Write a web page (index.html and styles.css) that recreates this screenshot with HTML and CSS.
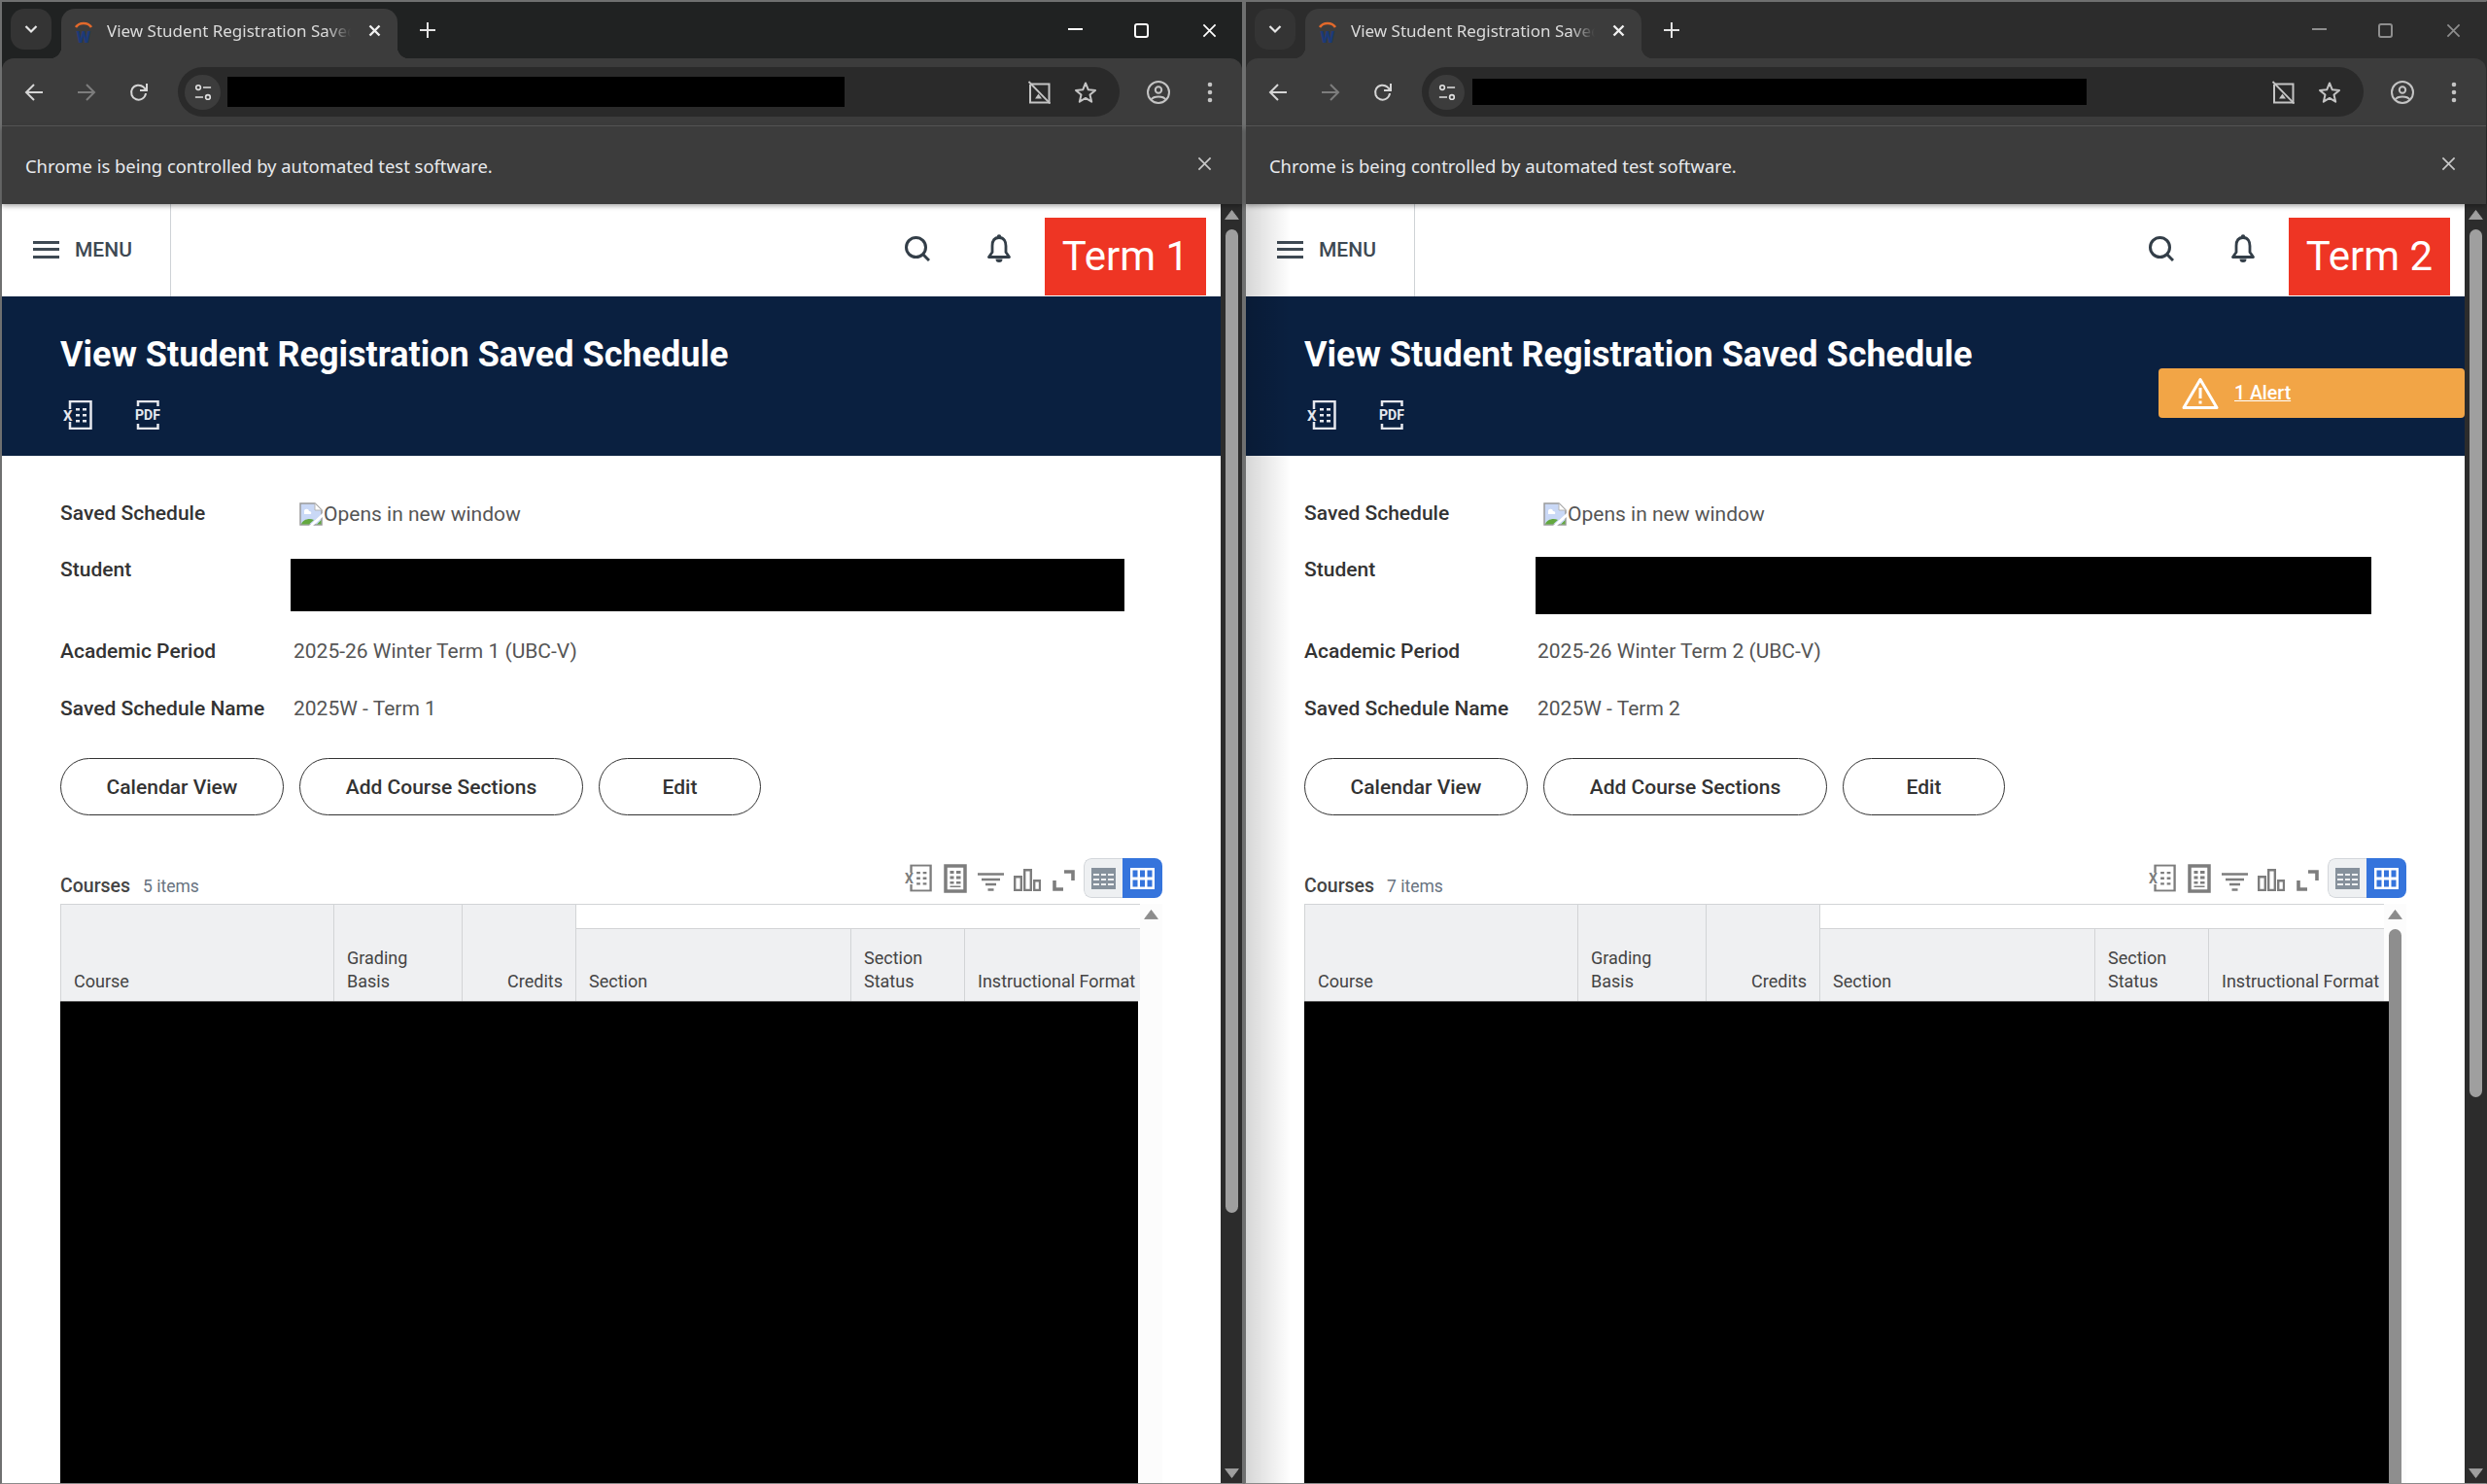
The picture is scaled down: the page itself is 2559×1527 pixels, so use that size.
FILE: index.html
```html
<!DOCTYPE html>
<html lang="en">
<head>
  <meta charset="UTF-8" />
  <title>View Student Registration Saved Schedule</title>
  <link rel="stylesheet" href="styles.css">
</head>
<body>
  <!-- shared icons -->
  <svg class="sprite" aria-hidden="true">
    <symbol id="i-close" viewBox="0 0 16 16">
      <path d="M1.5 1.5 14.5 14.5M14.5 1.5 1.5 14.5" fill="none" stroke="currentColor" stroke-width="1.8"/>
    </symbol>
    <symbol id="i-tabclose" viewBox="0 0 13 13">
      <path d="M1.5 1.5 11.500 11.500M11.500 1.5 1.5 11.500" fill="none" stroke="currentColor" stroke-width="2.400"/>
    </symbol>
    <symbol id="i-chevron" viewBox="0 0 14 10">
      <path d="M1.5 2 7 7.5 12.5 2" fill="none" stroke="currentColor" stroke-width="2.2"/>
    </symbol>
    <symbol id="i-plus" viewBox="0 0 16 16">
      <path d="M8 0V16M0 8H16" fill="none" stroke="currentColor" stroke-width="2"/>
    </symbol>
    <symbol id="i-back" viewBox="0 0 20 20">
      <path d="M19 10H2M10 2 2 10l8 8" fill="none" stroke="currentColor" stroke-width="2"/>
    </symbol>
    <symbol id="i-forward" viewBox="0 0 20 20">
      <path d="M1 10H18M10 2l8 8-8 8" fill="none" stroke="currentColor" stroke-width="2"/>
    </symbol>
    <symbol id="i-reload" viewBox="0 0 20 20">
      <path d="M17 11a7.5 7.5 0 1 1-2.4-6.4L17 7" fill="none" stroke="currentColor" stroke-width="2"/>
      <path d="M18 1v7h-7" fill="none" stroke="currentColor" stroke-width="2"/>
    </symbol>
    <symbol id="i-tune" viewBox="0 0 20 20">
      <circle cx="4.5" cy="4.5" r="2.6" fill="none" stroke="currentColor" stroke-width="1.8"/>
      <circle cx="15.5" cy="15.5" r="2.6" fill="none" stroke="currentColor" stroke-width="1.8"/>
      <path d="M10 4.5H19M1 15.5H10" fill="none" stroke="currentColor" stroke-width="1.8"/>
    </symbol>
    <symbol id="i-nocast" viewBox="0 0 24 24">
      <path d="M4 3.5H22.5V22.500H3V4" fill="none" stroke="currentColor" stroke-width="2"/>
      <path d="M1.500 1 23.500 23.500" fill="none" stroke="currentColor" stroke-width="1.800"/>
      <path d="M8 18.500 11.500 13.500 15 18.500Z" fill="currentColor"/>
    </symbol>
    <symbol id="i-star" viewBox="0 0 24 24">
      <path d="M12 2.500 14.800 9.300 22 9.900 16.500 14.600 18.200 21.700 12 17.900 5.800 21.700 7.500 14.600 2 9.900 9.200 9.300Z" fill="none" stroke="currentColor" stroke-width="2" stroke-linejoin="round"/>
    </symbol>
    <symbol id="i-profile" viewBox="0 0 24 24">
      <circle cx="12" cy="12" r="11" fill="none" stroke="currentColor" stroke-width="2"/>
      <circle cx="12" cy="9.500" r="3.200" fill="none" stroke="currentColor" stroke-width="2"/>
      <path d="M4.500 19.500C7 15.500 17 15.500 19.500 19.500" fill="none" stroke="currentColor" stroke-width="2"/>
    </symbol>
    <symbol id="i-dots" viewBox="0 0 6 22">
      <circle cx="3" cy="3" r="2.300" fill="currentColor"/>
      <circle cx="3" cy="11" r="2.300" fill="currentColor"/>
      <circle cx="3" cy="19" r="2.300" fill="currentColor"/>
    </symbol>
    <symbol id="i-search" viewBox="0 0 26 26">
      <circle cx="11.500" cy="11.500" r="10" fill="none" stroke="currentColor" stroke-width="3"/>
      <path d="M19 19 25 25" fill="none" stroke="currentColor" stroke-width="3"/>
    </symbol>
    <symbol id="i-bell" viewBox="0 0 24 30">
      <path d="M12 3.500C6.500 3.500 5 8 5 12V18.500L1.500 23.500H22.500L19 18.500V12C19 8 17.500 3.500 12 3.500Z" fill="none" stroke="currentColor" stroke-width="2.800" stroke-linejoin="round"/>
      <circle cx="12" cy="2.500" r="2.200" fill="currentColor"/>
      <path d="M8.500 25.500a3.500 3.500 0 0 0 7 0Z" fill="currentColor"/>
    </symbol>
    <symbol id="i-sheet" viewBox="0 0 30 30">
      <path d="M7 9V1H28.500V29H7V22" fill="none" stroke="currentColor" stroke-width="2.500"/>
      <path d="M13 8h4v2.500h-4zM20 8h4v2.500h-4zM13 14h4v2.500h-4zM20 14h4v2.500h-4zM13 20h4v2.500h-4zM20 20h4v2.500h-4z" fill="currentColor"/>
    </symbol>
    <symbol id="i-brackets" viewBox="0 0 26 30">
      <path d="M3 6V1H23.500V6M3 24V29H23.500V24" fill="none" stroke="currentColor" stroke-width="2.500"/>
    </symbol>
    <symbol id="i-doc" viewBox="0 0 24 30">
      <path d="M2 2H22V28H2Z" fill="none" stroke="currentColor" stroke-width="3.500"/>
      <path d="M6.500 7h4v3h-4zM13 7h4.500v3H13zM6.500 12.500h4v3h-4zM13 12.500h4.500v3H13zM6.500 18h4v2.500h-4zM13 18h4.500v2.500H13zM6.500 22.500h11v1.500h-11z" fill="currentColor"/>
    </symbol>
    <symbol id="i-filter" viewBox="0 0 27 19">
      <path d="M0 1.500H27M4 7H23M8 12H19M10.500 17.500H16.500" fill="none" stroke="currentColor" stroke-width="2.600"/>
    </symbol>
    <symbol id="i-chart" viewBox="0 0 28 23">
      <path d="M1.200 8.200H7.800V22H1.200ZM11.200 1.200H17.800V22H11.200ZM21.200 12.200H27V22H21.200Z" fill="none" stroke="currentColor" stroke-width="2.400"/>
    </symbol>
    <symbol id="i-expand" viewBox="0 0 23 22">
      <path d="M12 2H21V11M11 20H2V11" fill="none" stroke="currentColor" stroke-width="3.600"/>
    </symbol>
    <symbol id="i-rows" viewBox="0 0 25 22">
      <path d="M0 0H25V22H0Z" fill="currentColor"/>
      <path d="M2 6h6v2H2zM10 6h5v2h-5zM17 6h6v2h-6zM2 11h6v2H2zM10 11h5v2h-5zM17 11h6v2h-6zM2 16h6v2H2zM10 16h5v2h-5zM17 16h6v2h-6z" fill="#eef0f2"/>
    </symbol>
    <symbol id="i-cells" viewBox="0 0 25 22">
      <path d="M0 0H25V22H0Z" fill="#fff"/>
      <path d="M2.500 2.500h5v7h-5zM10 2.500h5v7h-5zM17.500 2.500h5v7h-5zM2.500 12.500h5v7h-5zM10 12.500h5v7h-5zM17.500 12.500h5v7h-5z" fill="#3574dc"/>
    </symbol>
    <symbol id="i-broken" viewBox="0 0 24 24">
      <path d="M1 1H16L23 8V23H1Z" fill="#c9d8f6" stroke="#9a9a9a" stroke-width="1.500"/>
      <path d="M16 1V8H23Z" fill="#fff" stroke="#b5b5b5"/>
      <path d="M5 9.500a2.500 2.500 0 0 1 5-.5 2 2 0 0 1 2 3H5Z" fill="#fff"/>
      <path d="M2 22.500C3 18 10 15.500 15 18L10 22.500Z" fill="#63a83f"/>
      <path d="M10 24 24 11V15L14 24Z" fill="#fff"/>
      <path d="M18 22.500 22.500 18V22.500Z" fill="#63a83f"/>
    </symbol>
    <symbol id="i-warning" viewBox="0 0 38 34">
      <path d="M19 2.500 36 31.500H2Z" fill="none" stroke="currentColor" stroke-width="3" stroke-linejoin="round"/>
      <path d="M17.500 11h3v11h-3zM17.500 24.500h3v3h-3z" fill="currentColor"/>
    </symbol>
    <symbol id="i-up" viewBox="0 0 16 11"><path d="M8 .5 15.500 10.500H.5Z" fill="currentColor" stroke="currentColor" stroke-linejoin="round"/></symbol>
    <symbol id="i-down" viewBox="0 0 16 11"><path d="M.5 .5H15.500L8 10.500Z" fill="currentColor" stroke="currentColor" stroke-linejoin="round"/></symbol>
  </svg>

  <div class="desktop">

    <!-- Term 1 window -->
    <section class="window">
      <div class="titlebar">
        <div class="tab-search"><svg class="ic-chevron"><use href="#i-chevron"/></svg></div>
        <div class="tab">
          <svg class="favicon" viewBox="0 0 20 24">
            <path d="M2 8A9 7.500 0 0 1 18 8" fill="none" stroke="#e2692b" stroke-width="2.600"/>
            <text x="10" y="24" text-anchor="middle" class="favicon-w">W</text>
          </svg>
          <span class="tab-title">View Student Registration Saved Schedule</span>
          <svg class="tab-close"><use href="#i-tabclose"/></svg>
        </div>
        <svg class="new-tab"><use href="#i-plus"/></svg>
        <div class="win-controls">
          <span class="win-min"></span>
          <span class="win-max"></span>
          <svg class="win-close"><use href="#i-close"/></svg>
        </div>
      </div>
      <div class="toolbar">
        <svg class="nav-btn"><use href="#i-back"/></svg>
        <svg class="nav-btn nav-off"><use href="#i-forward"/></svg>
        <svg class="nav-btn"><use href="#i-reload"/></svg>
        <div class="omnibox">
          <span class="site-info"><svg class="ic-tune"><use href="#i-tune"/></svg></span>
          <span class="url-redact"></span>
          <svg class="ic-nocast"><use href="#i-nocast"/></svg>
          <svg class="ic-star"><use href="#i-star"/></svg>
        </div>
        <svg class="ic-profile"><use href="#i-profile"/></svg>
        <svg class="ic-dots"><use href="#i-dots"/></svg>
      </div>
      <div class="infobar">
        <span>Chrome is being controlled by automated test software.</span>
        <svg class="info-close"><use href="#i-close"/></svg>
      </div>
      <div class="viewport">
        <main class="page">
          <div class="topbar">
            <div class="menu-btn">
              <span class="burger"></span>
              <span>MENU</span>
            </div>
            <svg class="ic-search"><use href="#i-search"/></svg>
            <svg class="ic-bell"><use href="#i-bell"/></svg>
            <div class="term-badge">Term 1</div>
          </div>
          <header class="banner">
            <h1>View Student Registration Saved Schedule</h1>
            <div class="banner-icons">
              <svg class="ic-sheet" viewBox="0 0 30 30"><use href="#i-sheet"/><text x="0" y="21" class="icon-x">X</text></svg>
              <svg class="ic-pdf" viewBox="0 0 26 30"><use href="#i-brackets"/><text x="13" y="20" text-anchor="middle" textLength="26" lengthAdjust="spacingAndGlyphs" class="icon-pdf">PDF</text></svg>
            </div>
          </header>
          <div class="form">
            <div class="field">
              <label>Saved Schedule</label>
              <div class="value value-link"><svg class="ic-broken"><use href="#i-broken"/></svg>Opens in new window</div>
            </div>
            <div class="field field-student">
              <label>Student</label>
              <div class="student-redact"></div>
            </div>
            <div class="field">
              <label>Academic Period</label>
              <div class="value">2025-26 Winter Term 1 (UBC-V)</div>
            </div>
            <div class="field">
              <label>Saved Schedule Name</label>
              <div class="value">2025W - Term 1</div>
            </div>
            <div class="actions">
              <button class="btn btn-cal">Calendar View</button>
              <button class="btn btn-add">Add Course Sections</button>
              <button class="btn btn-edit">Edit</button>
            </div>
            <div class="grid-head">
              <span class="grid-title">Courses</span>
              <span class="grid-count">5 items</span>
              <div class="grid-tools">
                <svg class="t-sheet" viewBox="0 0 30 30"><use href="#i-sheet"/><text x="0" y="21" class="icon-x">X</text></svg>
                <svg class="t-doc"><use href="#i-doc"/></svg>
                <svg class="t-filter"><use href="#i-filter"/></svg>
                <svg class="t-chart"><use href="#i-chart"/></svg>
                <svg class="t-expand"><use href="#i-expand"/></svg>
                <div class="view-toggle">
                  <span class="view-opt"><svg class="ic-rows"><use href="#i-rows"/></svg></span>
                  <span class="view-opt view-on"><svg class="ic-cells"><use href="#i-cells"/></svg></span>
                </div>
              </div>
            </div>
            <div class="grid-wrap">
              <div class="grid">
                <div class="grid-cols">
                  <div class="col col-tall">Course</div>
                  <div class="col col-tall">Grading<br>Basis</div>
                  <div class="col col-tall col-right">Credits</div>
                  <div class="col-spacer"></div>
                  <div class="col">Section</div>
                  <div class="col">Section<br>Status</div>
                  <div class="col">Instructional Format</div>
                </div>
                <div class="grid-redact"></div>
              </div>
              <div class="grid-scroll">
                <svg class="grid-up"><use href="#i-up"/></svg>
              </div>
            </div>
          </div>
        </main>
        <aside class="page-scroll">
          <svg class="arrow"><use href="#i-up"/></svg>
          <div class="thumb"></div>
          <svg class="arrow arrow-down"><use href="#i-down"/></svg>
        </aside>
      </div>
    </section>

    <!-- Term 2 window -->
    <section class="window window-inactive">
      <div class="titlebar">
        <div class="tab-search"><svg class="ic-chevron"><use href="#i-chevron"/></svg></div>
        <div class="tab">
          <svg class="favicon" viewBox="0 0 20 24">
            <path d="M2 8A9 7.500 0 0 1 18 8" fill="none" stroke="#e2692b" stroke-width="2.600"/>
            <text x="10" y="24" text-anchor="middle" class="favicon-w">W</text>
          </svg>
          <span class="tab-title">View Student Registration Saved Schedule</span>
          <svg class="tab-close"><use href="#i-tabclose"/></svg>
        </div>
        <svg class="new-tab"><use href="#i-plus"/></svg>
        <div class="win-controls">
          <span class="win-min"></span>
          <span class="win-max"></span>
          <svg class="win-close"><use href="#i-close"/></svg>
        </div>
      </div>
      <div class="toolbar">
        <svg class="nav-btn"><use href="#i-back"/></svg>
        <svg class="nav-btn nav-off"><use href="#i-forward"/></svg>
        <svg class="nav-btn"><use href="#i-reload"/></svg>
        <div class="omnibox">
          <span class="site-info"><svg class="ic-tune"><use href="#i-tune"/></svg></span>
          <span class="url-redact"></span>
          <svg class="ic-nocast"><use href="#i-nocast"/></svg>
          <svg class="ic-star"><use href="#i-star"/></svg>
        </div>
        <svg class="ic-profile"><use href="#i-profile"/></svg>
        <svg class="ic-dots"><use href="#i-dots"/></svg>
      </div>
      <div class="infobar">
        <span>Chrome is being controlled by automated test software.</span>
        <svg class="info-close"><use href="#i-close"/></svg>
      </div>
      <div class="viewport">
        <main class="page">
          <div class="topbar">
            <div class="menu-btn">
              <span class="burger"></span>
              <span>MENU</span>
            </div>
            <svg class="ic-search"><use href="#i-search"/></svg>
            <svg class="ic-bell"><use href="#i-bell"/></svg>
            <div class="term-badge">Term 2</div>
          </div>
          <header class="banner">
            <h1>View Student Registration Saved Schedule</h1>
            <div class="banner-icons">
              <svg class="ic-sheet" viewBox="0 0 30 30"><use href="#i-sheet"/><text x="0" y="21" class="icon-x">X</text></svg>
              <svg class="ic-pdf" viewBox="0 0 26 30"><use href="#i-brackets"/><text x="13" y="20" text-anchor="middle" textLength="26" lengthAdjust="spacingAndGlyphs" class="icon-pdf">PDF</text></svg>
            </div>
            <div class="alert-bar">
              <svg class="ic-warning"><use href="#i-warning"/></svg>
              <a class="alert-link">1 Alert</a>
            </div>
          </header>
          <div class="form">
            <div class="field">
              <label>Saved Schedule</label>
              <div class="value value-link"><svg class="ic-broken"><use href="#i-broken"/></svg>Opens in new window</div>
            </div>
            <div class="field field-student">
              <label>Student</label>
              <div class="student-redact"></div>
            </div>
            <div class="field">
              <label>Academic Period</label>
              <div class="value">2025-26 Winter Term 2 (UBC-V)</div>
            </div>
            <div class="field">
              <label>Saved Schedule Name</label>
              <div class="value">2025W - Term 2</div>
            </div>
            <div class="actions">
              <button class="btn btn-cal">Calendar View</button>
              <button class="btn btn-add">Add Course Sections</button>
              <button class="btn btn-edit">Edit</button>
            </div>
            <div class="grid-head">
              <span class="grid-title">Courses</span>
              <span class="grid-count">7 items</span>
              <div class="grid-tools">
                <svg class="t-sheet" viewBox="0 0 30 30"><use href="#i-sheet"/><text x="0" y="21" class="icon-x">X</text></svg>
                <svg class="t-doc"><use href="#i-doc"/></svg>
                <svg class="t-filter"><use href="#i-filter"/></svg>
                <svg class="t-chart"><use href="#i-chart"/></svg>
                <svg class="t-expand"><use href="#i-expand"/></svg>
                <div class="view-toggle">
                  <span class="view-opt"><svg class="ic-rows"><use href="#i-rows"/></svg></span>
                  <span class="view-opt view-on"><svg class="ic-cells"><use href="#i-cells"/></svg></span>
                </div>
              </div>
            </div>
            <div class="grid-wrap">
              <div class="grid">
                <div class="grid-cols">
                  <div class="col col-tall">Course</div>
                  <div class="col col-tall">Grading<br>Basis</div>
                  <div class="col col-tall col-right">Credits</div>
                  <div class="col-spacer"></div>
                  <div class="col">Section</div>
                  <div class="col">Section<br>Status</div>
                  <div class="col">Instructional Format</div>
                </div>
                <div class="grid-redact"></div>
              </div>
              <div class="grid-scroll">
                <svg class="grid-up"><use href="#i-up"/></svg>
                <div class="grid-thumb"></div>
              </div>
            </div>
          </div>
        </main>
        <aside class="page-scroll">
          <svg class="arrow"><use href="#i-up"/></svg>
          <div class="thumb"></div>
          <svg class="arrow arrow-down"><use href="#i-down"/></svg>
        </aside>
        <div class="window-shadow"></div>
      </div>
    </section>

  </div>
</body>
</html>
```

FILE: styles.css
```css
html, body {
  margin: 0;
  height: 100%;
  overflow: hidden;
  background: #fff;
}
svg {
  display: block;
  flex-shrink: 0;
}
.sprite {
  width: 0;
  height: 0;
  position: absolute;
}
.desktop {
  display: flex;
  width: 2560px;
  height: 1527px;
}

/* browser frame */
.window {
  width: 1280px;
  height: 1527px;
  box-sizing: border-box;
  display: flex;
  flex-direction: column;
  border-top: 2px solid #6f7070;
  border-left: 2px solid #6f7070;
  border-right: 2px solid #6f7070;
  border-bottom: 1px solid #8a8a8a;
  background: #202222;
  font-family: "Noto Sans", sans-serif;
  color: #e3e3e3;
}
.window-inactive {
  background: #2c2c2c;
  border-right-color: #2c2c2c;
}
.titlebar {
  height: 58px;
  flex-shrink: 0;
  display: flex;
  align-items: flex-start;
  padding-top: 7px;
  box-sizing: border-box;
}
.tab-search {
  width: 42px;
  height: 42px;
  margin-left: 9px;
  border-radius: 14px;
  background: #343434;
  display: flex;
  align-items: center;
  justify-content: center;
}
.ic-chevron {
  width: 14px;
  height: 10px;
  color: #e6e6e6;
}
.tab {
  position: relative;
  width: 346px;
  height: 51px;
  margin-left: 10px;
  box-sizing: border-box;
  padding: 0 17px 6px 13px;
  background: #3c3c3c;
  border-radius: 14px 14px 0 0;
  display: flex;
  align-items: center;
}
.tab::before, .tab::after {
  content: "";
  position: absolute;
  bottom: 0;
  width: 12px;
  height: 12px;
}
.tab::before {
  left: -12px;
  background: radial-gradient(circle at 0 0, transparent 12px, #3c3c3c 12.5px);
}
.tab::after {
  right: -12px;
  background: radial-gradient(circle at 100% 0, transparent 12px, #3c3c3c 12.5px);
}
.favicon {
  width: 20px;
  height: 24px;
  overflow: visible;
}
.favicon-w {
  font: 900 17px Roboto, sans-serif;
  fill: #1c3a78;
}
.tab-title {
  width: 252px;
  margin-left: 14px;
  font-size: 17px;
  white-space: nowrap;
  overflow: hidden;
  color: #dcdcdc;
  -webkit-mask-image: linear-gradient(90deg, #000 90%, transparent);
  mask-image: linear-gradient(90deg, #000 90%, transparent);
}
.tab-close {
  width: 13px;
  height: 13px;
  margin-left: 18px;
  color: #f0f0f0;
}
.new-tab {
  width: 16px;
  height: 16px;
  margin: 14px 0 0 23px;
  color: #e3e3e3;
}
.win-controls {
  margin-left: auto;
  display: flex;
  align-items: center;
  height: 44px;
  padding-right: 26px;
}
.win-min {
  width: 15px;
  height: 2px;
  margin-top: -2px;
  background: #fff;
}
.win-max {
  width: 15px;
  height: 15px;
  box-sizing: border-box;
  margin-left: 53px;
  border: 2px solid #fff;
  border-radius: 3px;
}
.win-close {
  width: 15px;
  height: 15px;
  margin-left: 55px;
  color: #fff;
}
.window-inactive .win-min {
  background: #8e8e8e;
}
.window-inactive .win-max {
  border-color: #8e8e8e;
}
.window-inactive .win-close {
  color: #8e8e8e;
}
.toolbar {
  height: 70px;
  flex-shrink: 0;
  box-sizing: border-box;
  display: flex;
  align-items: center;
  background: #3c3c3c;
  border-radius: 12px 12px 0 0;
  border-bottom: 1px solid #5a5a5a;
}
.nav-btn {
  width: 20px;
  height: 20px;
  margin-left: 23px;
  color: #d6d6d6;
}
.nav-btn + .nav-btn {
  margin-left: 34px;
}
.nav-off {
  color: #7d7d7d;
}
.omnibox {
  width: 969px;
  height: 51px;
  margin-left: 30px;
  border-radius: 26px;
  background: #2a2a2a;
  display: flex;
  align-items: center;
  box-sizing: border-box;
  padding-left: 7px;
}
.site-info {
  width: 37px;
  height: 36px;
  border-radius: 18px;
  background: #3c3c3c;
  display: flex;
  align-items: center;
  justify-content: center;
}
.ic-tune {
  width: 18px;
  height: 18px;
  color: #e0e0e0;
}
.url-redact {
  width: 635px;
  height: 31px;
  margin-left: 7px;
  background: #000;
}
.window-inactive .url-redact {
  width: 632px;
  height: 27px;
  margin-left: 8px;
}
.ic-nocast {
  width: 24px;
  height: 24px;
  margin-left: 188px;
  color: #c4c4c4;
}
.window-inactive .ic-nocast {
  margin-left: 190px;
}
.ic-star {
  width: 24px;
  height: 24px;
  margin-left: 24px;
  color: #c4c4c4;
}
.ic-profile {
  width: 24px;
  height: 24px;
  margin-left: 28px;
  color: #c4c4c4;
}
.ic-dots {
  width: 6px;
  height: 22px;
  margin-left: 38px;
  color: #c4c4c4;
}
.infobar {
  height: 80px;
  flex-shrink: 0;
  box-sizing: border-box;
  padding: 0 31px 0 24px;
  background: #3c3c3c;
  display: flex;
  align-items: center;
  justify-content: space-between;
  font-size: 18.4px;
  color: #e8eaed;
  box-shadow: 0 2px 5px rgba(0, 0, 0, .35);
  position: relative;
  z-index: 2;
}
.info-close {
  width: 15px;
  height: 15px;
  margin-top: -4px;
  color: #c8c8c8;
}

/* workday page */
.viewport {
  flex: 1;
  min-height: 0;
  display: flex;
  position: relative;
  overflow: hidden;
  font-family: Roboto, sans-serif;
}
.window-shadow {
  position: absolute;
  left: 0;
  top: 0;
  bottom: 0;
  width: 46px;
  background: linear-gradient(90deg, rgba(0, 0, 0, .16), transparent);
  pointer-events: none;
}
.page {
  width: 1254px;
  flex-shrink: 0;
  background: #fff;
  color: #333;
}
.topbar {
  height: 95px;
  display: flex;
  align-items: flex-start;
}
.menu-btn {
  width: 141px;
  height: 93px;
  padding: 0 0 2px 32px;
  margin-right: -32px;
  border-right: 1px solid #ced2d6;
  display: flex;
  align-items: center;
  font-size: 21px;
  font-weight: 500;
  color: #3e4953;
}
.burger {
  width: 27px;
  height: 18px;
  margin-right: 16px;
  border-top: 3px solid #3e4953;
  border-bottom: 3px solid #3e4953;
  box-sizing: border-box;
  position: relative;
}
.burger::before {
  content: "";
  position: absolute;
  left: 0;
  right: 0;
  top: 4.5px;
  height: 3px;
  background: #3e4953;
}
.ic-search {
  width: 26px;
  height: 26px;
  margin: 33px 0 0 787px;
  color: #333e48;
}
.ic-bell {
  width: 24px;
  height: 30px;
  margin: 31px 0 0 59px;
  color: #333e48;
}
.term-badge {
  width: 166px;
  height: 80px;
  margin: 14px 0 0 35px;
  background: #ee3524;
  color: #fff;
  font-size: 42px;
  line-height: 70px;
  text-align: center;
  box-sizing: border-box;
  padding-top: 5px;
}
.banner {
  height: 164px;
  box-sizing: border-box;
  padding: 37px 0 0 60px;
  background: #0a2040;
  color: #fff;
  position: relative;
}
.banner h1 {
  margin: 0;
  font-size: 36px;
  line-height: 46px;
  font-weight: 700;
}
.banner-icons {
  display: flex;
  margin-top: 24px;
  color: #e6e8ee;
}
.icon-x {
  font: 700 15px Roboto, sans-serif;
  fill: currentColor;
}
.icon-pdf {
  font: 700 14px Roboto, sans-serif;
  fill: currentColor;
}
.ic-sheet {
  width: 30px;
  height: 30px;
  margin-left: 3px;
}
.ic-pdf {
  width: 26px;
  height: 30px;
  margin-left: 44px;
}
.alert-bar {
  position: absolute;
  right: 0;
  top: 74px;
  width: 315px;
  height: 51px;
  box-sizing: border-box;
  padding-left: 24px;
  display: flex;
  align-items: center;
  background: #f2a546;
  border-radius: 4px;
  color: #fff;
}
.ic-warning {
  width: 38px;
  height: 34px;
  color: #fff;
}
.alert-link {
  margin-left: 16px;
  font-size: 19.5px;
  font-weight: 500;
  text-decoration: underline;
}
.form {
  padding: 39px 0 0 60px;
  font-size: 21px;
}
.field {
  display: flex;
  align-items: flex-start;
  min-height: 40px;
  margin-bottom: 19px;
  line-height: 40px;
}
.field label {
  width: 240px;
  font-weight: 500;
  color: #333;
}
.value {
  color: #555;
}
.value-link {
  display: flex;
  align-items: center;
  margin-left: 6px;
  padding-top: 1px;
}
.ic-broken {
  width: 24px;
  height: 24px;
  margin: -1px 1px 0 0;
}
.field:first-child {
  margin-bottom: 17px;
}
.field-student {
  height: 63px;
  margin-bottom: 21px;
}
.student-redact {
  width: 858px;
  height: 54px;
  margin: 9px 0 0 -3px;
  background: #000;
}
.window-inactive .student-redact {
  width: 860px;
  height: 59px;
  margin: 7px 0 0 -2px;
}
.actions {
  display: flex;
  gap: 16px;
  margin-top: 31px;
}
.btn {
  height: 59px;
  border: 1.5px solid #333;
  border-radius: 30px;
  background: #fff;
  color: #333;
  font: 500 21px Roboto, sans-serif;
  padding: 0;
}
.btn-cal {
  width: 230px;
}
.btn-add {
  width: 292px;
}
.btn-edit {
  width: 167px;
}
.grid-head {
  display: flex;
  align-items: flex-end;
  height: 41px;
  margin-top: 44px;
  margin-bottom: 6px;
  width: 1134px;
}
.grid-title {
  font-size: 19.5px;
  font-weight: 500;
  line-height: 24px;
  color: #444;
}
.grid-count {
  font-size: 17.5px;
  line-height: 24px;
  color: #68737f;
  margin-left: 13px;
}
.grid-tools {
  margin-left: auto;
  display: flex;
  align-items: center;
  height: 41px;
  color: #7d7d7d;
}
.t-sheet {
  width: 28px;
  height: 29px;
}
.t-doc {
  width: 24px;
  height: 30px;
  margin-left: 12px;
}
.t-filter {
  width: 27px;
  height: 19px;
  margin-left: 11px;
  margin-top: 8px;
}
.t-chart {
  width: 28px;
  height: 23px;
  margin-left: 10px;
  margin-top: 4px;
}
.t-expand {
  width: 23px;
  height: 22px;
  margin-left: 12px;
  margin-top: 4px;
}
.view-toggle {
  display: flex;
  margin-left: 9px;
  height: 41px;
  border-radius: 8px;
  overflow: hidden;
}
.view-opt {
  width: 40px;
  box-sizing: border-box;
  border: 1px solid #d3d6da;
  border-right: 0;
  border-radius: 8px 0 0 8px;
  background: #eef0f2;
  display: flex;
  align-items: center;
  justify-content: center;
  color: #86919c;
}
.view-on {
  width: 41px;
  border: 0;
  border-radius: 0;
  background: #3574dc;
}
.ic-rows, .ic-cells {
  width: 25px;
  height: 22px;
}
.grid-wrap {
  display: flex;
  width: 1134px;
}
.grid {
  width: 1111px;
  flex-shrink: 0;
}
.grid-cols {
  display: grid;
  grid-template-columns: 281px 132px 117px 283px 117px 181px;
  grid-template-rows: 24px 75px;
  box-sizing: border-box;
  border-top: 1px solid #d2d4d6;
  border-left: 1px solid #d2d4d6;
  font-size: 18px;
  line-height: 24px;
  color: #444;
}
.col {
  background: #eff0f2;
  box-sizing: border-box;
  padding: 0 13px 8px 13px;
  display: flex;
  flex-direction: column;
  justify-content: flex-end;
  border-right: 1px solid #d2d4d6;
  border-top: 1px solid #d2d4d6;
  white-space: nowrap;
}
.col:last-child {
  border-right: 0;
}
.col-tall {
  grid-row: 1 / 3;
  border-top: 0;
}
.col-right {
  align-items: flex-end;
}
.col-spacer {
  grid-column: 4 / 7;
  grid-row: 1;
}
.grid-redact {
  width: 1109px;
  height: 500px;
  background: #000;
  border-top: 1px solid #555;
  position: relative;
}
.window-inactive .grid-redact {
  width: 1117px;
}
.grid-scroll {
  width: 23px;
  height: 600px;
  background: #fcfcfc;
  padding-top: 6px;
  box-sizing: border-box;
  color: #8c8c8c;
}
.grid-up {
  width: 15px;
  height: 10px;
  margin-left: 4px;
}
.grid-thumb {
  width: 13px;
  height: 600px;
  margin: 10px 0 0 5px;
  border-radius: 7px;
  background: #8e8e8e;
  position: relative;
  z-index: 1;
}
.page-scroll {
  flex: 1;
  background: #2c2c2c;
  box-sizing: border-box;
  padding: 6px 0 5px 4px;
  display: flex;
  flex-direction: column;
  color: #9f9f9f;
}
.arrow {
  width: 15px;
  height: 10px;
}
.arrow-down {
  margin-top: auto;
}
.thumb {
  width: 13px;
  height: 1012px;
  margin: 10px 0 0 1px;
  border-radius: 7px;
  background: #9f9f9f;
}
.window-inactive .thumb {
  height: 893px;
}
```
